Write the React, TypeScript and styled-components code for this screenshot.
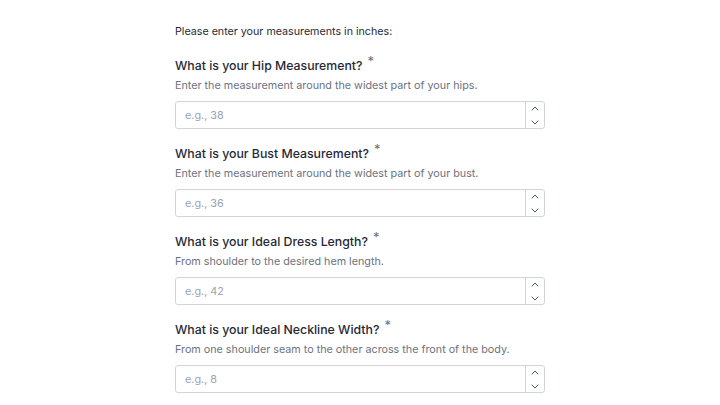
import React from "react";
import styled, { createGlobalStyle } from "styled-components";

const GlobalStyle = createGlobalStyle`
  html, body {
    margin: 0;
    padding: 0;
    background: #ffffff;
    font-family: Inter, "Noto Sans", sans-serif;
  }
`;

const Page = styled.div`
  padding: 22px 0 0 175px;
  width: 370px;
`;

const Intro = styled.p`
  margin: 0 0 14px;
  font-size: 10.7px;
  line-height: 20px;
  color: #1f2937;
`;

const Field = styled.div`
  margin-bottom: 15px;
`;

const Label = styled.label`
  display: block;
  height: 20px;
  font-size: 12.3px;
  line-height: 20px;
  font-weight: 500;
  color: #1f2937;
`;

const Required = styled.span`
  position: relative;
  top: -4px;
  margin-left: 5px;
  font-size: 13px;
  line-height: 0;
  font-weight: 400;
  color: #6b7280;
`;

const Hint = styled.div`
  font-size: 10.75px;
  line-height: 20px;
  color: #6b7280;
  margin-bottom: 5px;
`;

const InputBox = styled.div`
  display: flex;
  height: 28px;
  box-sizing: border-box;
  border: 1px solid #d1d5db;
  border-radius: 3px;
  overflow: hidden;
`;

const Input = styled.input`
  flex: 1;
  min-width: 0;
  border: none;
  outline: none;
  padding: 0 9px;
  font-family: inherit;
  font-size: 10.8px;
  color: #1f2937;
  background: transparent;

  &::placeholder {
    color: #9ca3af;
  }
`;

const Spinner = styled.div`
  width: 18px;
  border-left: 1px solid #d1d5db;
  display: flex;
  flex-direction: column;
  align-items: center;
  justify-content: center;
  gap: 9px;
  color: #4b5563;
`;

const Chevron = ({ up }: { up?: boolean }) => (
  <svg width="8" height="5" viewBox="0 0 8 5" fill="none">
    <path
      d={up ? "M1 4L4 1L7 4" : "M1 1L4 4L7 1"}
      stroke="currentColor"
      strokeWidth="1"
      strokeLinecap="round"
      strokeLinejoin="round"
    />
  </svg>
);

const fields = [
  {
    label: "What is your Hip Measurement?",
    hint: "Enter the measurement around the widest part of your hips.",
    placeholder: "e.g., 38",
  },
  {
    label: "What is your Bust Measurement?",
    hint: "Enter the measurement around the widest part of your bust.",
    placeholder: "e.g., 36",
  },
  {
    label: "What is your Ideal Dress Length?",
    hint: "From shoulder to the desired hem length.",
    placeholder: "e.g., 42",
  },
  {
    label: "What is your Ideal Neckline Width?",
    hint: "From one shoulder seam to the other across the front of the body.",
    placeholder: "e.g., 8",
  },
];

export default function App() {
  return (
    <>
      <GlobalStyle />
      <Page>
        <Intro>Please enter your measurements in inches:</Intro>
        {fields.map((f) => (
          <Field key={f.label}>
            <Label>
              {f.label}
              <Required>*</Required>
            </Label>
            <Hint>{f.hint}</Hint>
            <InputBox>
              <Input type="text" placeholder={f.placeholder} />
              <Spinner>
                <Chevron up />
                <Chevron />
              </Spinner>
            </InputBox>
          </Field>
        ))}
      </Page>
    </>
  );
}
